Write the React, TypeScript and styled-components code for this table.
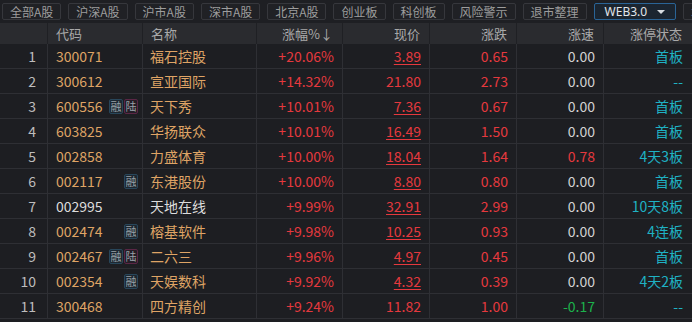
import React from "react";
import styled, { createGlobalStyle } from "styled-components";

const GlobalStyle = createGlobalStyle`
  body {
    margin: 0;
    background: #1d1e22;
    font-family: "Noto Sans CJK SC", "Noto Sans", sans-serif;
    overflow: hidden;
  }
`;

type Row = {
  code: string;
  name: string;
  pct: string;
  price: string;
  limit: boolean;
  change: string;
  speed: string;
  status: string;
  rong?: boolean;
  lu?: boolean;
  plain?: boolean;
};

const tabs = [
  "全部A股",
  "沪深A股",
  "沪市A股",
  "深市A股",
  "北京A股",
  "创业板",
  "科创板",
  "风险警示",
  "退市整理",
];

const rows: Row[] = [
  { code: "300071", name: "福石控股", pct: "+20.06%", price: "3.89", limit: true, change: "0.65", speed: "0.00", status: "首板" },
  { code: "300612", name: "宣亚国际", pct: "+14.32%", price: "21.80", limit: false, change: "2.73", speed: "0.00", status: "--" },
  { code: "600556", name: "天下秀", pct: "+10.01%", price: "7.36", limit: true, change: "0.67", speed: "0.00", status: "首板", rong: true, lu: true },
  { code: "603825", name: "华扬联众", pct: "+10.01%", price: "16.49", limit: true, change: "1.50", speed: "0.00", status: "首板" },
  { code: "002858", name: "力盛体育", pct: "+10.00%", price: "18.04", limit: true, change: "1.64", speed: "0.78", status: "4天3板" },
  { code: "002117", name: "东港股份", pct: "+10.00%", price: "8.80", limit: true, change: "0.80", speed: "0.00", status: "首板", rong: true },
  { code: "002995", name: "天地在线", pct: "+9.99%", price: "32.91", limit: true, change: "2.99", speed: "0.00", status: "10天8板", plain: true },
  { code: "002474", name: "榕基软件", pct: "+9.98%", price: "10.25", limit: true, change: "0.93", speed: "0.00", status: "4连板", rong: true },
  { code: "002467", name: "二六三", pct: "+9.96%", price: "4.97", limit: true, change: "0.45", speed: "0.00", status: "首板", rong: true, lu: true },
  { code: "002354", name: "天娱数科", pct: "+9.92%", price: "4.32", limit: true, change: "0.39", speed: "0.00", status: "4天2板", rong: true },
  { code: "300468", name: "四方精创", pct: "+9.24%", price: "11.82", limit: false, change: "1.00", speed: "-0.17", status: "--" },
];

const speedColor = (v: string) => {
  const n = parseFloat(v);
  if (n > 0) return "#e5393e";
  if (n < 0) return "#1cb24c";
  return "#d2d2d2";
};

export default function App() {
  return (
    <>
      <GlobalStyle />
      <Page>
        <TabBar>
          {tabs.map((t) => (
            <Tab key={t}>{t}</Tab>
          ))}
          <Tab $active>
            WEB3.0
            <Caret />
          </Tab>
          <Tab>地区</Tab>
        </TabBar>
        <HeaderRow>
          <HeadCell $align="right" />
          <HeadCell $align="left">代码</HeadCell>
          <HeadCell $align="left">名称</HeadCell>
          <HeadCell $align="right">涨幅%↓</HeadCell>
          <HeadCell $align="right">现价</HeadCell>
          <HeadCell $align="right">涨跌</HeadCell>
          <HeadCell $align="right">涨速</HeadCell>
          <HeadCell $align="right">涨停状态</HeadCell>
        </HeaderRow>
        {rows.map((r, i) => (
          <DataRow key={r.code}>
            <IndexCell>{i + 1}</IndexCell>
            <CodeCell $plain={r.plain}>
              <span>{r.code}</span>
              <Badges>
                {r.rong && <Badge $kind="rong">融</Badge>}
                {r.lu && <Badge $kind="lu">陆</Badge>}
              </Badges>
            </CodeCell>
            <NameCell $plain={r.plain}>{r.name}</NameCell>
            <NumCell $color="#e5393e">{r.pct}</NumCell>
            <NumCell $color="#e5393e">
              <Price $limit={r.limit}>{r.price}</Price>
            </NumCell>
            <NumCell $color="#e5393e">{r.change}</NumCell>
            <NumCell $color={speedColor(r.speed)}>{r.speed}</NumCell>
            <NumCell $color="#1fb2c4">{r.status}</NumCell>
          </DataRow>
        ))}
      </Page>
    </>
  );
}

const columns = "48px 95px 114px 86px 87px 87px 87px 88px";

const Page = styled.div`
  width: 692px;
  height: 322px;
  overflow: hidden;
  background: #1d1e22;
`;

const TabBar = styled.div`
  display: flex;
  gap: 7px;
  height: 23px;
  padding: 3px 0 0 2px;
  box-sizing: border-box;
  background: #1e1f23;
  white-space: nowrap;
  overflow: hidden;
`;

const Tab = styled.div<{ $active?: boolean }>`
  flex: none;
  display: flex;
  align-items: center;
  gap: 10px;
  height: 17px;
  padding: 0 ${(p) => (p.$active ? "10px" : "7px")};
  box-sizing: border-box;
  border: 1px solid ${(p) => (p.$active ? "#2a6496" : "#36373c")};
  border-radius: 2px;
  background: ${(p) => (p.$active ? "#1b2530" : "#202125")};
  color: ${(p) => (p.$active ? "#e2e6ea" : "#9d9d9d")};
  font-family: ${(p) =>
    p.$active ? `"Noto Sans", sans-serif` : `"Noto Sans CJK SC", sans-serif`};
  font-size: 12px;
  line-height: 1;
`;

const Caret = styled.span`
  width: 0;
  height: 0;
  border-left: 4px solid transparent;
  border-right: 4px solid transparent;
  border-top: 4px solid #d8dce0;
`;

const HeaderRow = styled.div`
  display: grid;
  grid-template-columns: ${columns};
  height: 21px;
  background: #2a2b2f;
`;

const HeadCell = styled.div<{ $align: "left" | "right" }>`
  display: flex;
  align-items: center;
  justify-content: ${(p) => (p.$align === "left" ? "flex-start" : "flex-end")};
  padding: 0 9px 0 8px;
  border-right: 1px solid #1f2024;
  color: #a9a9a9;
  font-size: 13px;
  &:last-child {
    border-right: none;
    padding-right: 10px;
  }
`;

const DataRow = styled.div`
  display: grid;
  grid-template-columns: ${columns};
  height: 25px;
  box-sizing: border-box;
  border-bottom: 1px solid #2e2f34;
  font-size: 14px;
`;

const Cell = styled.div`
  display: flex;
  align-items: center;
  border-right: 1px solid #2e2f34;
  white-space: nowrap;
  overflow: hidden;
  &:last-child {
    border-right: none;
  }
`;

const IndexCell = styled(Cell)`
  justify-content: flex-end;
  padding-right: 11px;
  color: #bdbdbd;
`;

const CodeCell = styled(Cell)<{ $plain?: boolean }>`
  justify-content: space-between;
  padding: 0 4px 0 8px;
  color: ${(p) => (p.$plain ? "#dcdcdc" : "#dfa465")};
`;

const NameCell = styled(Cell)<{ $plain?: boolean }>`
  padding-left: 7px;
  color: ${(p) => (p.$plain ? "#dcdcdc" : "#dfa465")};
`;

const NumCell = styled(Cell)<{ $color: string }>`
  justify-content: flex-end;
  padding-right: 8px;
  color: ${(p) => p.$color};
  &:last-child {
    padding-right: 9px;
  }
`;

const Price = styled.span<{ $limit: boolean }>`
  text-decoration: ${(p) => (p.$limit ? "underline" : "none")};
  text-underline-offset: 2px;
`;

const Badges = styled.div`
  display: flex;
  gap: 1px;
`;

const Badge = styled.span<{ $kind: "rong" | "lu" }>`
  display: flex;
  align-items: center;
  justify-content: center;
  width: 14px;
  height: 15px;
  box-sizing: border-box;
  border: 1px solid ${(p) => (p.$kind === "rong" ? "#28465a" : "#5a2645")};
  border-radius: 2px;
  background: ${(p) => (p.$kind === "rong" ? "#1d2731" : "#241d26")};
  color: #9aa2a8;
  font-size: 11px;
  line-height: 1;
`;
